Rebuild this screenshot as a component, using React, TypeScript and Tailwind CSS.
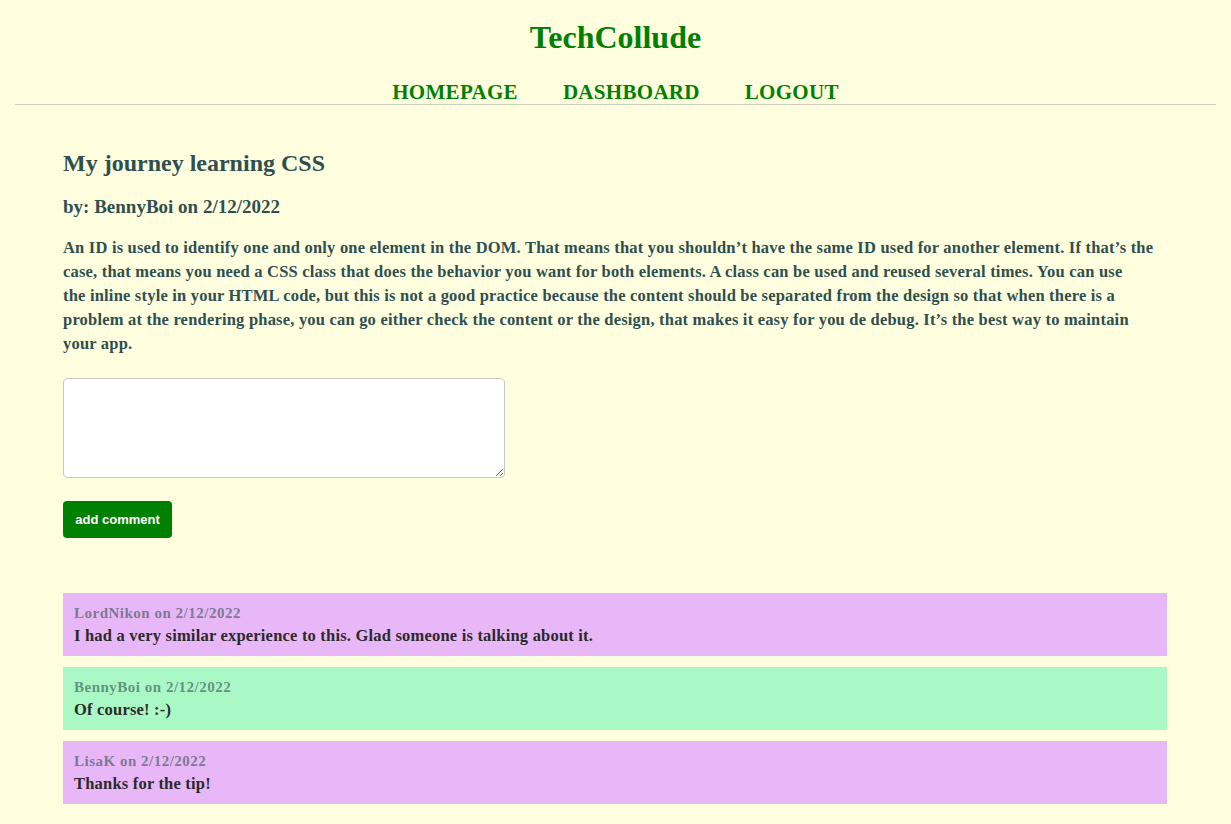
const serif = { fontFamily: '"Liberation Serif", "DejaVu Serif", serif' };

type Comment = { user: string; date: string; text: string; tone: "purple" | "green" };

const comments: Comment[] = [
  { user: "LordNikon", date: "2/12/2022", text: "I had a very similar experience to this. Glad someone is talking about it.", tone: "purple" },
  { user: "BennyBoi", date: "2/12/2022", text: "Of course! :-)", tone: "green" },
  { user: "LisaK", date: "2/12/2022", text: "Thanks for the tip!", tone: "purple" },
];

export default function App() {
  return (
    <div className="min-h-[824px] bg-[#ffffe0]" style={serif}>
      {/* Header */}
      <header className="mx-[15px] pt-[17px] border-b border-[#cfcfc0]">
        <h1 className="text-center text-[32px] leading-[40px] font-bold text-[#008000]">TechCollude</h1>
        <nav className="mt-6 flex justify-center gap-[45px] text-[21px] leading-[23px] font-bold text-[#008000] tracking-[0.3px]">
          <a href="#">HOMEPAGE</a>
          <a href="#">DASHBOARD</a>
          <a href="#">LOGOUT</a>
        </nav>
      </header>

      <main className="pl-[63px] pr-[64px] pb-[19px]">
        <section className="text-[#2f4f4f]">
          <h2 className="mt-[42px] text-[24px] leading-[32px] font-bold">My journey learning CSS</h2>
          <h3 className="mt-4 text-[19px] leading-[24px] font-bold">by: BennyBoi on 2/12/2022</h3>
          <p className="mt-[17px] text-[16.5px] leading-[24px] font-bold tracking-[0.2px]">
            An ID is used to identify one and only one element in the DOM. That means that you shouldn’t have the same ID used for another element. If that’s the
            <br />
            case, that means you need a CSS class that does the behavior you want for both elements. A class can be used and reused several times. You can use
            <br />
            the inline style in your HTML code, but this is not a good practice because the content should be separated from the design so that when there is a
            <br />
            problem at the rendering phase, you can go either check the content or the design, that makes it easy for you de debug. It’s the best way to maintain
            <br />
            your app.
          </p>
        </section>

        <form className="mt-[22px] flex flex-col items-start">
          <textarea className="w-[442px] h-[100px] bg-white border border-[#c8c8c8] rounded-[4px] resize-y" />
          <button
            type="button"
            className="mt-[23px] h-[37px] w-[109px] rounded-[4px] bg-[#008000] text-white text-[13px] font-bold font-['Liberation_Sans',Arial,sans-serif]"
          >
            add comment
          </button>
        </form>

        <div className="mt-[55px] flex flex-col gap-[11px]">
          {comments.map((c) => (
            <div
              key={c.user + c.text}
              className={`px-[11px] pt-[9px] pb-[8px] ${c.tone === "purple" ? "bg-[#e8b7f8]" : "bg-[#aaf8c6]"}`}
            >
              <p className="text-[15px] leading-[22px] font-bold tracking-[0.5px] text-[#2f4f4f]/60">
                {c.user} on {c.date}
              </p>
              <p className="text-[16.5px] leading-[24px] font-bold tracking-[0.2px] text-[#2a2a2a]">{c.text}</p>
            </div>
          ))}
        </div>
      </main>
    </div>
  );
}
